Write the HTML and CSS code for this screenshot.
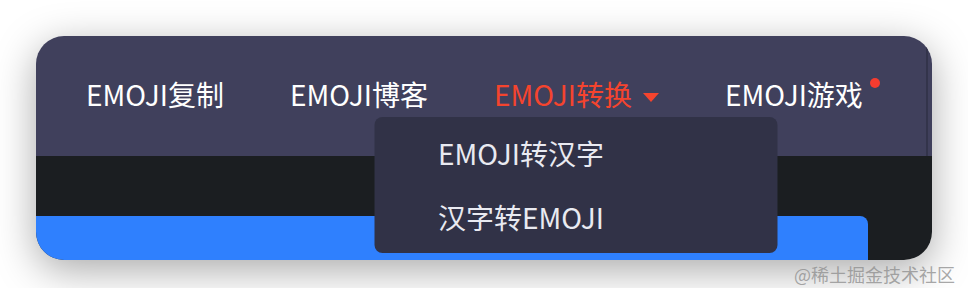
FILE: index.html
```html
<!DOCTYPE html>
<html lang="zh-CN">
<head>
  <meta charset="UTF-8">
  <meta name="viewport" content="width=device-width, initial-scale=1.0">
  <title>EMOJI</title>
  <link rel="stylesheet" href="styles.css">
</head>
<body>
  <div class="stage">
    <div class="window">
      <div class="nav">
        <div class="menu">
          <div class="nav-item"><span class="label">EMOJI复制</span></div>
          <div class="nav-item"><span class="label">EMOJI博客</span></div>
          <div class="nav-item active">
            <span class="label">EMOJI转换</span>
            <svg class="caret" width="16" height="9" viewBox="0 0 16 9"><path d="M0 0 L16 0 L8 9 Z" fill="currentColor"/></svg>
            <div class="dropdown">
              <div class="dropdown-item">EMOJI转汉字</div>
              <div class="dropdown-item">汉字转EMOJI</div>
            </div>
          </div>
          <div class="nav-item"><span class="label">EMOJI游戏<i class="dot"></i></span></div>
        </div>
      </div>
      <div class="content">
        <div class="card"></div>
      </div>
    </div>
    <div class="watermark">@稀土掘金技术社区</div>
  </div>
</body>
</html>
```

FILE: styles.css
```css
body {
  margin: 0;
  background-color: #fff;
  font-family: "Noto Sans CJK SC", "Noto Sans", sans-serif;
}

.stage {
  padding: 36px 0 0 36px;
}

.window {
  width: 896px;
  height: 224px;
  border-radius: 28px;
  overflow: hidden;
  display: flex;
  flex-direction: column;
  box-shadow: 0 10px 40px rgba(0, 0, 0, 0.34);
}

.nav {
  height: 120px;
  background-color: #40405c;
  display: flex;
  padding-right: 4px;
  box-sizing: border-box;
}

.menu {
  flex: 1;
  display: flex;
  align-items: center;
  padding-left: 17px;
  padding-bottom: 4px;
  border-right: 2px solid #33344b;
}

.nav-item {
  position: relative;
  display: flex;
  align-items: center;
  padding: 0 33px;
  height: 40px;
  font-size: 28px;
  line-height: 40px;
  color: #fff;
}

.nav-item.active {
  color: #f5442e;
}

.label {
  position: relative;
}

.caret {
  margin-left: 11px;
  margin-top: 7px;
}

.dot {
  position: absolute;
  top: 4px;
  right: -17px;
  width: 10px;
  height: 10px;
  border-radius: 50%;
  background-color: #f53c2f;
}

.dropdown {
  position: absolute;
  top: calc(100% + 3px);
  left: 50%;
  transform: translateX(-50%);
  width: 403px;
  padding: 4px 0;
  background-color: #313247;
  border-radius: 8px;
  z-index: 2;
}

.dropdown-item {
  height: 64px;
  line-height: 64px;
  padding-left: 63px;
  font-size: 28px;
  color: #e9eaf1;
  white-space: nowrap;
}

.content {
  flex: 1;
  background-color: #1b1e21;
  padding-top: 60px;
}

.card {
  width: 832px;
  height: 44px;
  background-color: #2f80fe;
  border-radius: 0 8px 0 0;
}

.watermark {
  text-align: right;
  padding-right: 13px;
  font-size: 18px;
  line-height: 28px;
  color: rgba(140, 140, 140, 0.75);
}
```
